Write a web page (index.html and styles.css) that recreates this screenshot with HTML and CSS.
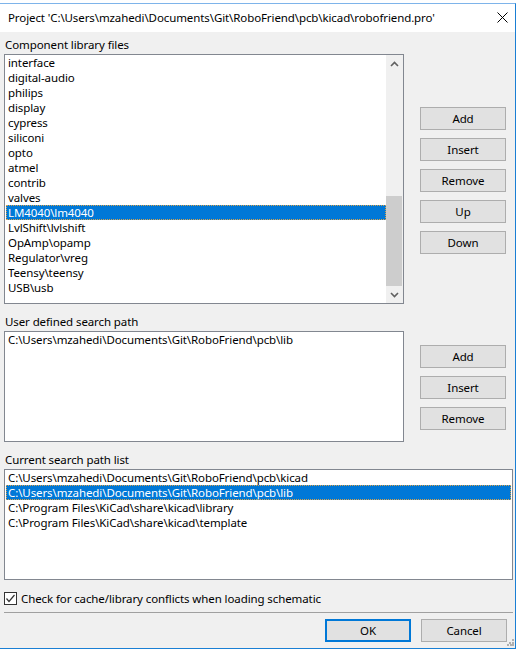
FILE: index.html
```html
<!DOCTYPE html>
<html>
<head>
<meta charset="utf-8">
<link rel="stylesheet" href="styles.css">
</head>
<body>
<div class="window">
  <div class="titlebar">
    <span class="title">Project 'C:\Users\mzahedi\Documents\Git\RoboFriend\pcb\kicad\robofriend.pro'</span>
    <svg class="close" width="11" height="11" viewBox="0 0 11 11"><path d="M0.5 0.5 L10.5 10.5 M10.5 0.5 L0.5 10.5" stroke="#000" stroke-width="1" fill="none"/></svg>
  </div>
  <div class="content">
    <div class="label">Component library files</div>
    <div class="row">
      <div class="listbox list1">
        <div class="items">
          <div class="item">interface</div>
          <div class="item">digital-audio</div>
          <div class="item">philips</div>
          <div class="item">display</div>
          <div class="item">cypress</div>
          <div class="item">siliconi</div>
          <div class="item">opto</div>
          <div class="item">atmel</div>
          <div class="item">contrib</div>
          <div class="item">valves</div>
          <div class="item selected">LM4040\lm4040</div>
          <div class="item">LvlShift\lvlshift</div>
          <div class="item">OpAmp\opamp</div>
          <div class="item">Regulator\vreg</div>
          <div class="item">Teensy\teensy</div>
          <div class="item">USB\usb</div>
        </div>
        <div class="scrollbar">
          <div class="arrow"><svg width="9" height="6" viewBox="0 0 9 6"><path d="M1 5 L4.5 1.5 L8 5" stroke="#606060" stroke-width="1.6" fill="none"/></svg></div>
          <div class="track"><div class="thumb"></div></div>
          <div class="arrow"><svg width="9" height="6" viewBox="0 0 9 6"><path d="M1 1 L4.5 4.5 L8 1" stroke="#606060" stroke-width="1.6" fill="none"/></svg></div>
        </div>
      </div>
      <div class="buttons buttons1">
        <div class="btn">Add</div>
        <div class="btn">Insert</div>
        <div class="btn">Remove</div>
        <div class="btn">Up</div>
        <div class="btn">Down</div>
      </div>
    </div>
    <div class="label spaced">User defined search path</div>
    <div class="row">
      <div class="listbox list2">
        <div class="items">
          <div class="item">C:\Users\mzahedi\Documents\Git\RoboFriend\pcb\lib</div>
        </div>
      </div>
      <div class="buttons buttons2">
        <div class="btn">Add</div>
        <div class="btn">Insert</div>
        <div class="btn">Remove</div>
      </div>
    </div>
    <div class="label spaced">Current search path list</div>
    <div class="listbox list3">
      <div class="items">
        <div class="item">C:\Users\mzahedi\Documents\Git\RoboFriend\pcb\kicad</div>
        <div class="item selected">C:\Users\mzahedi\Documents\Git\RoboFriend\pcb\lib</div>
        <div class="item">C:\Program Files\KiCad\share\kicad\library</div>
        <div class="item">C:\Program Files\KiCad\share\kicad\template</div>
      </div>
    </div>
    <div class="check-row">
      <span class="checkbox"><svg width="11" height="11" viewBox="0 0 11 11"><path d="M1.5 5.5 L4 8.5 L9.5 2" stroke="#333" stroke-width="1.2" fill="none"/></svg></span>
      <span>Check for cache/library conflicts when loading schematic</span>
    </div>
    <div class="separator"></div>
    <div class="footer">
      <div class="btn default">OK</div>
      <div class="btn">Cancel</div>
    </div>
  </div>
  <svg class="grip" width="7" height="7" viewBox="0 0 7 7"><g fill="#b0b0b0"><rect x="5" y="0" width="2" height="2"/><rect x="2" y="3" width="2" height="2"/><rect x="5" y="3" width="2" height="2"/><rect x="0" y="5" width="2" height="2"/><rect x="3" y="5" width="2" height="2"/><rect x="5" y="5" width="2" height="2"/></g></svg>
</div>
</body>
</html>
```
FILE: styles.css
```css
html, body {
  margin: 0;
  padding: 0;
  background: #ffffff;
}
body {
  font-family: "Noto Sans", "Open Sans", sans-serif;
  font-size: 11.5px;
  letter-spacing: -0.1px;
  color: #000;
}
.window {
  position: relative;
  margin-top: 3px;
  width: 515px;
  height: 644px;
  border-top: 1px solid #7eb4ea;
  border-right: 1px solid #1a7fd4;
  border-bottom: 1px solid #1a7fd4;
  background: #f0f0f0;
  display: flex;
  flex-direction: column;
}
.titlebar {
  height: 28px;
  background: #ffffff;
  display: flex;
  align-items: center;
  padding-left: 8px;
  position: relative;
}
.title {
  line-height: 28px;
}
.close {
  position: absolute;
  left: 497px;
  top: 8px;
}
.content {
  padding: 4px 0 0 4px;
  display: flex;
  flex-direction: column;
}
.label {
  line-height: 18px;
  height: 18px;
  padding-left: 1px;
}
.label.spaced {
  margin-top: 9px;
}
.row {
  display: flex;
  align-items: flex-start;
}
.listbox {
  background: #fff;
  border: 1px solid #828790;
  box-sizing: border-box;
  display: flex;
}
.list1 {
  width: 400px;
  height: 250px;
}
.list2 {
  width: 400px;
  height: 111px;
}
.list3 {
  width: 509px;
  height: 111px;
}
.items {
  flex: 1;
  display: flex;
  flex-direction: column;
}
.item {
  line-height: 15px;
  height: 15px;
  padding-left: 2px;
  margin: 0 1px;
  white-space: nowrap;
}
.list1 .item {
  margin-right: 0;
}
.item.selected {
  background: #0078d7;
  color: #fff;
  outline: 1px dotted #d9a24a;
  outline-offset: -1px;
}
.scrollbar {
  width: 17px;
  background: #f0f0f0;
  display: flex;
  flex-direction: column;
}
.arrow {
  height: 17px;
  display: flex;
  align-items: center;
  justify-content: center;
}
.track {
  flex: 1;
  display: flex;
  flex-direction: column;
  justify-content: flex-end;
}
.thumb {
  height: 90px;
  background: #cdcdcd;
  margin: 0 1px 0 0;
}
.buttons {
  display: flex;
  flex-direction: column;
  gap: 8px;
  margin-left: 16px;
}
.buttons1 {
  margin-top: 53px;
}
.buttons2 {
  margin-top: 14px;
}
.btn {
  width: 86px;
  height: 23px;
  box-sizing: border-box;
  background: #e1e1e1;
  border: 1px solid #adadad;
  display: flex;
  align-items: center;
  justify-content: center;
}
.btn.default {
  border: 2px solid #0078d7;
}
.check-row {
  margin-top: 11px;
  display: flex;
  align-items: center;
  gap: 4px;
  height: 15px;
}
.checkbox {
  width: 13px;
  height: 13px;
  box-sizing: border-box;
  border: 1px solid #333;
  background: #fff;
  display: flex;
  align-items: center;
  justify-content: center;
}
.separator {
  margin-top: 6px;
  width: 509px;
  height: 1px;
  background: #a0a0a0;
}
.footer {
  margin-top: 6px;
  display: flex;
  gap: 10px;
  padding-left: 321px;
}
.grip {
  position: absolute;
  right: 1px;
  bottom: 2px;
}
```
